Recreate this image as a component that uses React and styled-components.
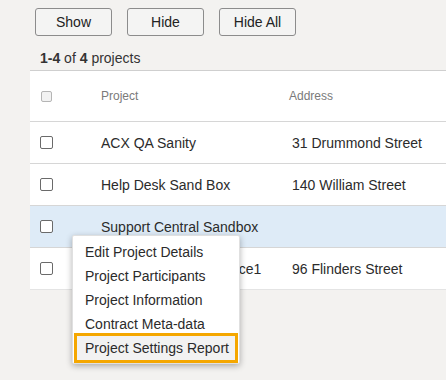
import styled, { createGlobalStyle } from 'styled-components';

const GlobalStyle = createGlobalStyle`
    body {
        margin: 0;
        background: #f3f2f0;
        font-family: "Liberation Sans", Arial, sans-serif;
        color: #333;
    }
`

const Page = styled.div`
    position: relative;
    padding: 8px 0 0 30px;
    height: 372px;
`

const Toolbar = styled.div`
    display: flex;
    gap: 15px;
    margin-left: 5px;
`

const Button = styled.button`
    width: 77px;
    height: 28px;
    background: #f4f4f3;
    border: 1px solid #8c8c8c;
    border-radius: 3px;
    font-family: inherit;
    font-size: 14px;
    color: #222;
    padding: 0;
`

const Count = styled.div`
    font-size: 14px;
    color: #333;
    margin: 12px 0 0 10px;
    height: 20px;
    line-height: 20px;
`

const Table = styled.div`
    margin-top: 2px;
    background: #fff;
    border-top: 1px solid #cfcfcf;
`

const Row = styled.div`
    display: grid;
    grid-template-columns: 71px 188px 1fr;
    align-items: center;
    height: ${p => p.$head ? 50 : 41}px;
    border-bottom: 1px solid ${p => p.$last ? '#e4e4e4' : '#d6d6d6'};
    background: ${p => p.$active ? '#deebf7' : '#fff'};
    font-size: ${p => p.$head ? 12 : 14}px;
    color: ${p => p.$head ? '#7a7a7a' : '#2b2b2b'};
`

const Box = styled.span`
    display: block;
    margin-left: ${p => p.$head ? 11 : 10}px;
    width: ${p => p.$head ? 9 : 11}px;
    height: ${p => p.$head ? 9 : 11}px;
    border: 1px solid ${p => p.$head ? '#b5b5b5' : '#6a6a6a'};
    border-radius: 2px;
    background: ${p => p.$head ? '#f2f2f2' : '#fff'};
`

const Cell = styled.span`
    padding-left: ${p => p.$pad || 0}px;
    white-space: nowrap;
`

const Menu = styled.div`
    position: absolute;
    left: 72px;
    top: 235px;
    width: 158px;
    padding: 4px 4px 3px;
    background: #fff;
    border: 1px solid #e0e0e0;
    border-radius: 2px;
    box-shadow: 0 2px 6px rgba(0, 0, 0, 0.3);
`

const Item = styled.div`
    height: 24px;
    line-height: 24px;
    padding-left: 8px;
    font-size: 14px;
    color: #2b2b2b;
    white-space: nowrap;
    background: ${p => p.$focus ? '#f2f2f2' : 'transparent'};
    outline: ${p => p.$focus ? '3px solid #f5a700' : 'none'};
`

const rows = [
    { name: 'ACX QA Sanity', address: '31 Drummond Street' },
    { name: 'Help Desk Sand Box', address: '140 William Street' },
    { name: 'Support Central Sandbox', address: '', active: true },
    { name: 'Support Central Practice1', address: '96 Flinders Street' },
]

const menuItems = [
    'Edit Project Details',
    'Project Participants',
    'Project Information',
    'Contract Meta-data',
    'Project Settings Report',
]

export default function App() {
    return (
        <Page>
            <GlobalStyle />
            <Toolbar>
                <Button>Show</Button>
                <Button>Hide</Button>
                <Button>Hide All</Button>
            </Toolbar>
            <Count><b>1-4</b> of <b>4</b> projects</Count>
            <Table>
                <Row $head>
                    <Box $head />
                    <Cell>Project</Cell>
                    <Cell>Address</Cell>
                </Row>
                {rows.map((r, i) => (
                    <Row key={r.name} $active={r.active} $last={i === rows.length - 1}>
                        <Box />
                        <Cell>{r.name}</Cell>
                        <Cell $pad={3}>{r.address}</Cell>
                    </Row>
                ))}
            </Table>
            <Menu>
                {menuItems.map((m, i) => (
                    <Item key={m} $focus={i === menuItems.length - 1}>{m}</Item>
                ))}
            </Menu>
        </Page>
    )
}
